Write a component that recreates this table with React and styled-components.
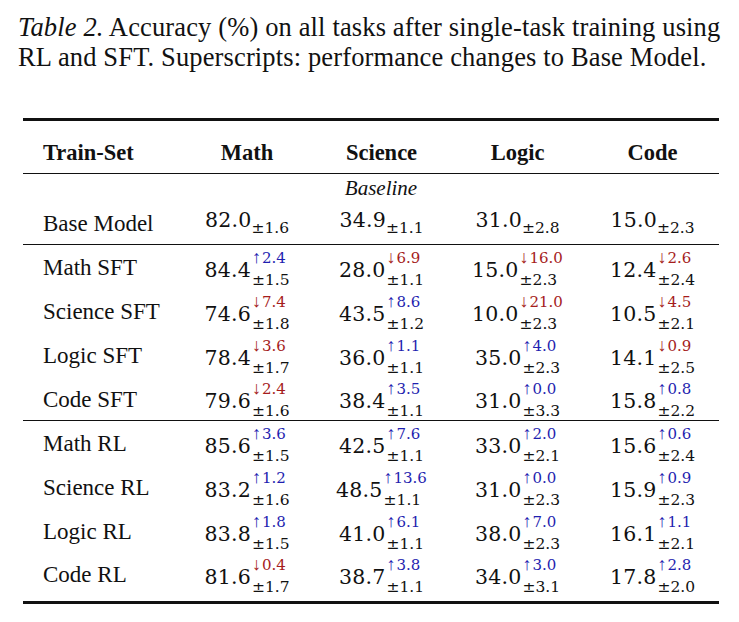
import React from "react";
import styled, { createGlobalStyle } from "styled-components";

const GlobalStyle = createGlobalStyle`
  html, body {
    margin: 0;
    padding: 0;
    background: #ffffff;
  }
  body {
    font-family: "Liberation Serif", "Times New Roman", serif;
    color: #111111;
  }
`;

const columns = ["Math", "Science", "Logic", "Code"];

// [value, change, std] per task; change null for baseline
const baseline = {
  name: "Base Model",
  cells: [
    ["82.0", null, "1.6"],
    ["34.9", null, "1.1"],
    ["31.0", null, "2.8"],
    ["15.0", null, "2.3"],
  ],
};

const sftRows = [
  {
    name: "Math SFT",
    cells: [
      ["84.4", "+2.4", "1.5"],
      ["28.0", "-6.9", "1.1"],
      ["15.0", "-16.0", "2.3"],
      ["12.4", "-2.6", "2.4"],
    ],
  },
  {
    name: "Science SFT",
    cells: [
      ["74.6", "-7.4", "1.8"],
      ["43.5", "+8.6", "1.2"],
      ["10.0", "-21.0", "2.3"],
      ["10.5", "-4.5", "2.1"],
    ],
  },
  {
    name: "Logic SFT",
    cells: [
      ["78.4", "-3.6", "1.7"],
      ["36.0", "+1.1", "1.1"],
      ["35.0", "+4.0", "2.3"],
      ["14.1", "-0.9", "2.5"],
    ],
  },
  {
    name: "Code SFT",
    cells: [
      ["79.6", "-2.4", "1.6"],
      ["38.4", "+3.5", "1.1"],
      ["31.0", "+0.0", "3.3"],
      ["15.8", "+0.8", "2.2"],
    ],
  },
];

const rlRows = [
  {
    name: "Math RL",
    cells: [
      ["85.6", "+3.6", "1.5"],
      ["42.5", "+7.6", "1.1"],
      ["33.0", "+2.0", "2.1"],
      ["15.6", "+0.6", "2.4"],
    ],
  },
  {
    name: "Science RL",
    cells: [
      ["83.2", "+1.2", "1.6"],
      ["48.5", "+13.6", "1.1"],
      ["31.0", "+0.0", "2.3"],
      ["15.9", "+0.9", "2.3"],
    ],
  },
  {
    name: "Logic RL",
    cells: [
      ["83.8", "+1.8", "1.5"],
      ["41.0", "+6.1", "1.1"],
      ["38.0", "+7.0", "2.3"],
      ["16.1", "+1.1", "2.1"],
    ],
  },
  {
    name: "Code RL",
    cells: [
      ["81.6", "-0.4", "1.7"],
      ["38.7", "+3.8", "1.1"],
      ["34.0", "+3.0", "3.1"],
      ["17.8", "+2.8", "2.0"],
    ],
  },
];

const Value = ({ cell }) => {
  const [v, change, std] = cell;
  if (!change) {
    return (
      <Num>
        {v}
        <Lone>±{std}</Lone>
      </Num>
    );
  }
  const up = change.startsWith("+");
  return (
    <Num>
      {v}
      <Scripts>
        <Sup $up={up}>
          <Arrow>{up ? "↑" : "↓"}</Arrow>
          {change.slice(1)}
        </Sup>
        <Sub>±{std}</Sub>
      </Scripts>
    </Num>
  );
};

const Section = ({ rows, last }) => (
  <Body $last={last}>
    {rows.map((r, i) => (
      <Row key={r.name} $end={last && i === rows.length - 1}>
        <NameCell>{r.name}</NameCell>
        {r.cells.map((c, j) => (
          <Cell key={j}>
            <Value cell={c} />
          </Cell>
        ))}
      </Row>
    ))}
  </Body>
);

const App = () => {
  return (
    <Page>
      <GlobalStyle />
      <Caption>
        <em>Table 2.</em> Accuracy (%) on all tasks after single-task training using
        <br />
        RL and SFT. Superscripts: performance changes to Base Model.
      </Caption>

      <Table>
        <colgroup>
          <col style={{ width: 157 }} />
          <col style={{ width: 134 }} />
          <col style={{ width: 135 }} />
          <col style={{ width: 137 }} />
          <col style={{ width: 133 }} />
        </colgroup>
        <thead>
          <HeadRow>
            <HeadCell $left>Train-Set</HeadCell>
            {columns.map((c) => (
              <HeadCell key={c}>{c}</HeadCell>
            ))}
          </HeadRow>
        </thead>
        <Body>
          <GroupRow>
            <GroupCell colSpan={5}>Baseline</GroupCell>
          </GroupRow>
          <BaseRow>
            <NameCell>{baseline.name}</NameCell>
            {baseline.cells.map((c, j) => (
              <Cell key={j}>
                <Value cell={c} />
              </Cell>
            ))}
          </BaseRow>
        </Body>
        <Section rows={sftRows} />
        <Section rows={rlRows} last />
      </Table>
    </Page>
  );
};

export default App;

const Page = styled.div`
  width: 739px;
  height: 622px;
  box-sizing: border-box;
  padding: 12px 20px 0 23px;
  overflow: hidden;
`;

const Caption = styled.p`
  margin: 0 0 46px -5px;
  font-size: 26.5px;
  line-height: 30px;
  letter-spacing: 0.14px;
  white-space: nowrap;
  color: #111;

  em {
    font-style: italic;
  }
`;

const Table = styled.table`
  width: 696px;
  border-collapse: collapse;
  table-layout: fixed;
  border-top: 3px solid #111;
  border-bottom: 3px solid #111;
`;

const HeadRow = styled.tr`
  height: 54px;
  border-bottom: 1.5px solid #111;
`;

const HeadCell = styled.th`
  padding: 11px 0 0 ${({ $left }) => ($left ? "20px" : "0")};
  text-align: ${({ $left }) => ($left ? "left" : "center")};
  font-size: 22.5px;
  font-weight: bold;
`;

const GroupRow = styled.tr`
  height: 27px;
`;

const GroupCell = styled.td`
  text-align: center;
  font-style: italic;
  font-size: 21px;
  line-height: 24px;
  padding: 2px 0 0 20px;
  vertical-align: middle;
`;

const BaseRow = styled.tr`
  height: 44px;

  td {
    padding-top: 4px;
  }
`;

const Body = styled.tbody`
  border-bottom: ${({ $last }) => ($last ? "none" : "1.5px solid #111")};
`;

const Row = styled.tr`
  height: ${({ $end }) => ($end ? "50px" : "44px")};

  td {
    padding-top: 3px;
    padding-bottom: ${({ $end }) => ($end ? "6px" : "0")};
  }
`;

const NameCell = styled.td`
  padding: 0 0 0 20px;
  font-size: 23px;
  line-height: 26px;
  vertical-align: middle;
  white-space: nowrap;
`;

const Cell = styled.td`
  padding: 0;
  text-align: center;
  vertical-align: middle;
  white-space: nowrap;
  line-height: 22px;
`;

const Num = styled.span`
  font-family: "DejaVu Serif", serif;
  font-size: 20.5px;
  color: #111;
  letter-spacing: 0.2px;
`;

const Lone = styled.span`
  display: inline-block;
  font-size: 15.5px;
  vertical-align: -6px;
  letter-spacing: 0;
`;

const Scripts = styled.span`
  display: inline-block;
  vertical-align: -8px;
  letter-spacing: 0;
  text-align: left;
  margin-left: 1px;
`;

const Sup = styled.span`
  display: block;
  font-size: 15px;
  line-height: 14px;
  color: ${({ $up }) => ($up ? "#1f1fb0" : "#a51c1c")};
`;

const Arrow = styled.span`
  font-family: "Liberation Serif", serif;
  font-size: 18px;
  margin-right: 1px;
`;

const Sub = styled.span`
  display: block;
  font-size: 15.5px;
  line-height: 14px;
  padding-top: 8px;
  color: #111;
`;
